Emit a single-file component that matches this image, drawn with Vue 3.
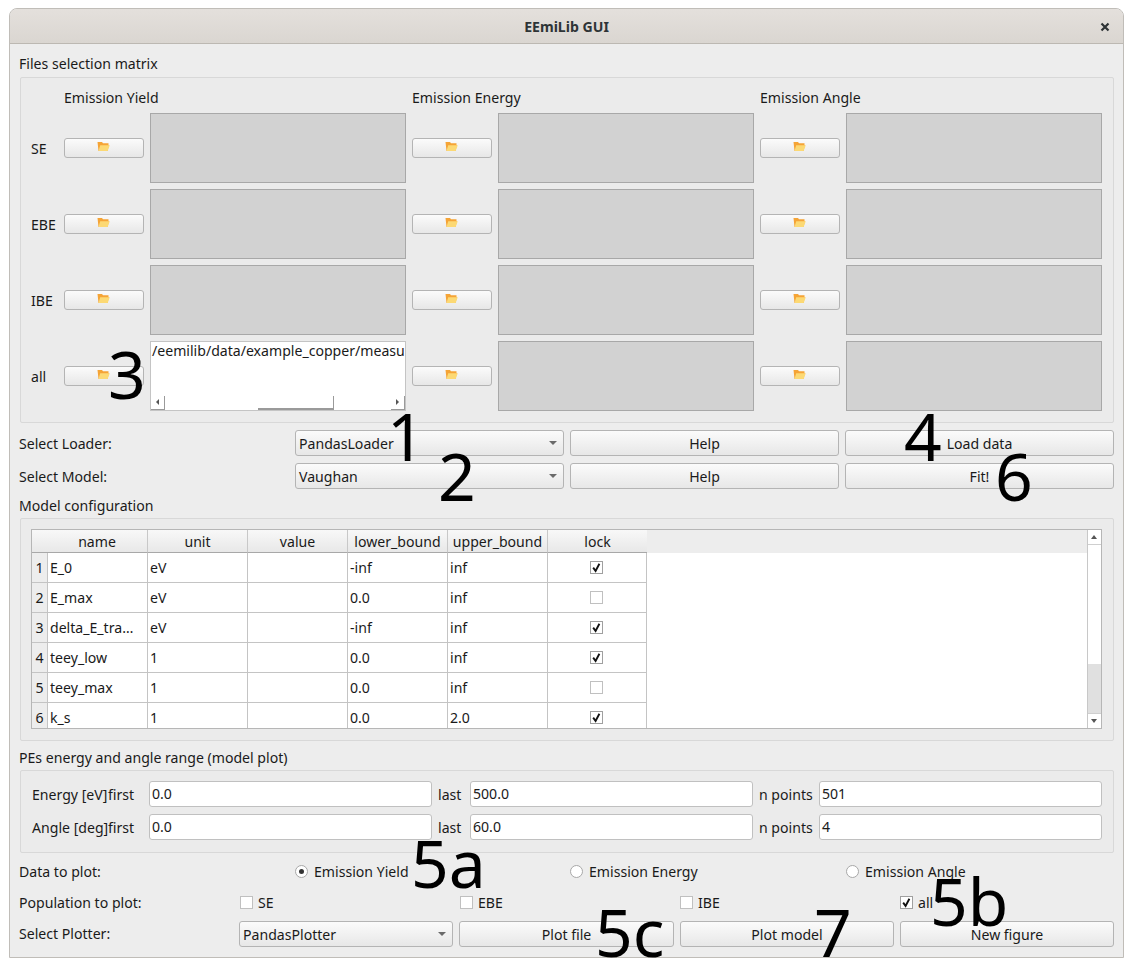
<script setup>
const fileRows = [
  { label: 'SE', cells: ['', '', ''] },
  { label: 'EBE', cells: ['', '', ''] },
  { label: 'IBE', cells: ['', '', ''] },
  { label: 'all', cells: ['/eemilib/data/example_copper/measu', '', ''] },
]
const columns = ['name', 'unit', 'value', 'lower_bound', 'upper_bound', 'lock']
const params = [
  ['E_0', 'eV', '-inf', 'inf', true],
  ['E_max', 'eV', '0.0', 'inf', false],
  ['delta_E_tra…', 'eV', '-inf', 'inf', true],
  ['teey_low', '1', '0.0', 'inf', true],
  ['teey_max', '1', '0.0', 'inf', false],
  ['k_s', '1', '0.0', '2.0', true],
]
const ranges = [
  { label: 'Energy [eV]', first: '0.0', last: '500.0', n: '501' },
  { label: 'Angle [deg]', first: '0.0', last: '60.0', n: '4' },
]
const radios = [
  { label: 'Emission Yield', on: true },
  { label: 'Emission Energy', on: false },
  { label: 'Emission Angle', on: false },
]
const pops = [
  { label: 'SE', on: false },
  { label: 'EBE', on: false },
  { label: 'IBE', on: false },
  { label: 'all', on: true },
]
const notes = [
  { t: '1', x: 377, y: 393 },
  { t: '2', x: 428, y: 433 },
  { t: '3', x: 98, y: 331 },
  { t: '4', x: 894, y: 393 },
  { t: '5a', x: 401, y: 820 },
  { t: '5b', x: 920, y: 858 },
  { t: '5c', x: 585, y: 889 },
  { t: '6', x: 985, y: 433 },
  { t: '7', x: 804, y: 889 },
]
</script>

<template>
  <div class="page">
    <div class="window">
      <header class="titlebar">
        <span class="title">EEmiLib GUI</span>
        <svg class="close" width="10" height="10" viewBox="0 0 10 10">
          <path d="M1.5 1.5 L8.5 8.5 M8.5 1.5 L1.5 8.5" stroke="#2e3436" stroke-width="2.2" fill="none" />
        </svg>
      </header>

      <main class="content">
        <div class="group-title first">Files selection matrix</div>
        <section class="group files">
          <div class="files-grid">
            <div></div>
            <div class="head">Emission Yield</div>
            <div class="head">Emission Energy</div>
            <div class="head">Emission Angle</div>
            <template v-for="row in fileRows" :key="row.label">
              <div class="row-label">{{ row.label }}</div>
              <div v-for="(cell, i) in row.cells" :key="i" class="file-cell">
                <button class="btn folder-btn">
                  <svg width="13" height="11" viewBox="0 0 13 11">
                    <path d="M0.5 1 H5 L6 2.2 H11.5 V4 H12 L10.5 10 H1.5 Z" fill="#f5a436" />
                    <path d="M3.2 4.2 H12.8 L10.6 10 H1.5 Z" fill="#fcd974" />
                  </svg>
                </button>
                <div v-if="cell" class="drop filled">
                  <div class="path">{{ cell }}</div>
                  <div class="hscroll">
                    <span class="sb-arrow left"></span>
                    <span class="sb-thumb"></span>
                    <span class="sb-arrow right"></span>
                  </div>
                </div>
                <div v-else class="drop"></div>
              </div>
            </template>
          </div>
        </section>

        <div class="select-row">
          <label class="select-label">Select Loader:</label>
          <div class="combo"><span>PandasLoader</span><i class="caret"></i></div>
          <button class="btn">Help</button>
          <button class="btn">Load data</button>
        </div>
        <div class="select-row">
          <label class="select-label">Select Model:</label>
          <div class="combo"><span>Vaughan</span><i class="caret"></i></div>
          <button class="btn">Help</button>
          <button class="btn">Fit!</button>
        </div>

        <div class="group-title model-title">Model configuration</div>
        <section class="group model">
          <div class="table">
            <div class="table-view">
              <div class="thead">
                <div class="corner"></div>
                <div v-for="c in columns" :key="c" class="th">{{ c }}</div>
                <div class="th-rest"></div>
              </div>
              <div v-for="(p, i) in params" :key="i" class="tr">
                <div class="rowhead">{{ i + 1 }}</div>
                <div class="td">{{ p[0] }}</div>
                <div class="td">{{ p[1] }}</div>
                <div class="td"></div>
                <div class="td">{{ p[2] }}</div>
                <div class="td">{{ p[3] }}</div>
                <div class="td center">
                  <span class="check" :class="{ on: p[4] }">
                    <svg v-if="p[4]" width="11" height="11" viewBox="0 0 11 11">
                      <path d="M2.2 5.6 L4.6 9 L8.4 1.8" stroke="#111" stroke-width="1.9" fill="none" />
                    </svg>
                  </span>
                </div>
              </div>
            </div>
            <div class="vscroll">
              <div class="vs-btn top"><i class="up"></i></div>
              <div class="vs-track"><div class="vs-thumb"></div></div>
              <div class="vs-btn bottom"><i class="down"></i></div>
            </div>
          </div>
        </section>

        <div class="group-title range-title">PEs energy and angle range (model plot)</div>
        <section class="group range">
          <div v-for="r in ranges" :key="r.label" class="range-row">
            <span class="range-name">{{ r.label }}</span>
            <span class="range-first">first</span>
            <div class="input">{{ r.first }}</div>
            <span class="range-last">last</span>
            <div class="input">{{ r.last }}</div>
            <span class="range-n">n points</span>
            <div class="input">{{ r.n }}</div>
          </div>
        </section>

        <div class="radio-row">
          <span class="bottom-label">Data to plot:</span>
          <div class="radios">
            <label v-for="r in radios" :key="r.label" class="opt radio-opt">
              <span class="radio" :class="{ on: r.on }"></span>{{ r.label }}
            </label>
          </div>
        </div>
        <div class="pop-row">
          <span class="bottom-label">Population to plot:</span>
          <div class="pops">
            <label v-for="p in pops" :key="p.label" class="opt">
              <span class="check" :class="{ on: p.on }">
                <svg v-if="p.on" width="11" height="11" viewBox="0 0 11 11">
                  <path d="M2.2 5.6 L4.6 9 L8.4 1.8" stroke="#111" stroke-width="1.9" fill="none" />
                </svg>
              </span>{{ p.label }}
            </label>
          </div>
        </div>
        <div class="plot-row">
          <span class="bottom-label">Select Plotter:</span>
          <div class="combo"><span>PandasPlotter</span><i class="caret"></i></div>
          <button class="btn">Plot file</button>
          <button class="btn">Plot model</button>
          <button class="btn">New figure</button>
        </div>
      </main>

      <span v-for="n in notes" :key="n.t" class="note" :style="{ left: n.x + 'px', top: n.y + 'px' }">{{ n.t }}</span>
    </div>
  </div>
</template>

<style>
html, body { margin: 0; background: #ffffff; }
</style>

<style scoped>
.page {
  width: 1133px;
  height: 967px;
  padding: 8px 9px 0;
  box-sizing: border-box;
  font-family: "Noto Sans", "Open Sans", sans-serif;
  font-size: 14.1px;
  color: #1a1a1a;
}
.window {
  position: relative;
  width: 1115px;
  height: 950px;
  box-sizing: border-box;
  border: 1px solid #c0bdb8;
  border-radius: 8px 8px 0 0;
  background: #ededed;
}
.titlebar {
  position: relative;
  height: 35px;
  box-sizing: border-box;
  display: flex;
  align-items: center;
  justify-content: center;
  background: linear-gradient(#e4e0dc, #dad6d1);
  border-bottom: 1px solid #bcb8b2;
  border-radius: 7px 7px 0 0;
}
.title { font-weight: 700; color: #2e3436; }
.close { position: absolute; right: 13px; top: 13px; }
.content { padding: 0 9px; }
.group-title { height: 18px; line-height: 18px; white-space: nowrap; }
.group-title.first { margin-top: 11px; }
.group {
  border: 1px solid #d8d8d8;
  border-radius: 2px;
  background: #ebebeb;
  margin-left: 1px;
  box-sizing: border-box;
}
.files { height: 346px; margin-top: 4px; padding: 11px 10px 0 10px; }
.files-grid {
  display: grid;
  grid-template-columns: 33px 348px 348px 342px;
  grid-template-rows: 18px repeat(4, 70px);
  row-gap: 6px;
  align-items: center;
}
.files-grid > .head { height: 18px; line-height: 18px; white-space: nowrap; }
.file-cell { display: flex; align-items: center; gap: 6px; height: 70px; }
.btn {
  font: inherit;
  color: #1a1a1a;
  padding: 0;
  height: 26px;
  box-sizing: border-box;
  border: 1px solid #b4b4b4;
  border-radius: 3px;
  background: linear-gradient(#fbfbfb, #e7e7e7);
  display: flex;
  align-items: center;
  justify-content: center;
}
.folder-btn { width: 80px; height: 20px; flex: none; }
.folder-btn svg { margin: -3px 2px 0 0; }
.drop {
  width: 256px;
  height: 70px;
  flex: none;
  box-sizing: border-box;
  border: 1px solid #a8a8a8;
  background: #d2d2d2;
}
.drop.filled { background: #ffffff; border-color: #c4c4c4; position: relative; }
.path { padding-left: 1px; line-height: 18px; white-space: nowrap; overflow: hidden; }
.hscroll { position: absolute; left: 0; right: 0; bottom: 0; height: 14px; }
.sb-arrow {
  position: absolute;
  bottom: 0;
  width: 14px;
  height: 14px;
  border-right: 1px solid #9a9a9a;
  border-bottom: 1px solid #9a9a9a;
  box-sizing: border-box;
}
.sb-arrow.left { left: 0; }
.sb-arrow.right { right: 0; }
.sb-arrow::after {
  content: "";
  position: absolute;
  top: 3px;
  border-top: 3px solid transparent;
  border-bottom: 3px solid transparent;
}
.sb-arrow.left::after { left: 5px; border-right: 3px solid #555; }
.sb-arrow.right::after { left: 5px; border-left: 3px solid #555; }
.sb-thumb {
  position: absolute;
  left: 107px;
  width: 76px;
  bottom: 0;
  height: 14px;
  box-sizing: border-box;
  border-right: 1px solid #9a9a9a;
  border-bottom: 2px solid #9a9a9a;
}
.select-row {
  display: grid;
  grid-template-columns: 270px 269px 269px 269px;
  column-gap: 6px;
  height: 26px;
  margin-top: 7px;
  align-items: center;
}
.select-label, .bottom-label { white-space: nowrap; }
.combo {
  position: relative;
  height: 26px;
  box-sizing: border-box;
  border: 1px solid #b4b4b4;
  border-radius: 3px;
  background: linear-gradient(#fbfbfb, #e7e7e7);
  display: flex;
  align-items: center;
  padding-left: 3px;
}
.caret {
  position: absolute;
  right: 6px;
  top: 10px;
  width: 0;
  height: 0;
  border-left: 4px solid transparent;
  border-right: 4px solid transparent;
  border-top: 4px solid #6a6a6a;
}
.model-title { margin-top: 8px; }
.model { height: 223px; margin-top: 3px; padding: 10px 11px 0 10px; }
.table {
  display: flex;
  height: 200px;
  box-sizing: border-box;
  border: 1px solid #b6b6b6;
  background: #ffffff;
}
.table-view { flex: 1; overflow: hidden; }
.thead { display: flex; height: 23px; background: #ededed; }
.corner {
  width: 15px;
  box-sizing: border-box;
  background: #f7f7f7;
  border-bottom: 1px solid #a8a8a8;
}
.th {
  width: 100px;
  box-sizing: border-box;
  border-left: 1px solid #c8c8c8;
  border-bottom: 1px solid #a8a8a8;
  background: linear-gradient(#f8f8f8, #e8e8e8);
  text-align: center;
  line-height: 23px;
  white-space: nowrap;
}
.corner { background: linear-gradient(#f8f8f8, #e8e8e8); }
.th:nth-child(2) { border-left: 0; }
.th-rest { flex: 1; }
.tr { display: flex; height: 30px; }
.rowhead {
  width: 15px;
  box-sizing: border-box;
  background: #ededed;
  border-bottom: 1px solid #c4c4c4;
  text-align: center;
  line-height: 29px;
}
.td {
  width: 100px;
  box-sizing: border-box;
  border-left: 1px solid #c4c4c4;
  border-bottom: 1px solid #c4c4c4;
  padding-left: 2px;
  line-height: 29px;
  white-space: nowrap;
  overflow: hidden;
}
.td:last-child { border-right: 1px solid #c4c4c4; }
.td.center { display: flex; justify-content: center; align-items: center; padding: 0 1px 1px 0; }
.vscroll {
  width: 14px;
  flex: none;
  box-sizing: border-box;
  border-left: 1px solid #c8c8c8;
  background: #ffffff;
  display: flex;
  flex-direction: column;
}
.vs-btn { height: 14px; flex: none; position: relative; }
.vs-btn.top { border-bottom: 1px solid #cfcfcf; }
.vs-btn.bottom { border-top: 1px solid #cfcfcf; }
.vs-btn i {
  position: absolute;
  left: 3px;
  top: 5px;
  border-left: 3px solid transparent;
  border-right: 3px solid transparent;
}
.vs-btn i.up { border-bottom: 4px solid #555; }
.vs-btn i.down { border-top: 4px solid #555; }
.vs-track { flex: 1; display: flex; flex-direction: column; justify-content: flex-end; }
.vs-thumb { height: 49px; background: #e0e0e0; }
.check {
  display: inline-block;
  width: 13px;
  height: 13px;
  box-sizing: border-box;
  border: 1px solid #c0c0c0;
  background: #ffffff;
  position: relative;
  flex: none;
}
.check.on { border-color: #a0a0a0; }
.check svg { position: absolute; left: 0; top: 0; }
.range-title { margin-top: 8px; }
.range { height: 83px; margin-top: 3px; padding: 10px 10px 0 10px; }
.range-row {
  display: grid;
  grid-template-columns: 77px 41px 283px 38px 283px 66px 283px;
  height: 26px;
  align-items: center;
  margin-bottom: 7px;
  white-space: nowrap;
}
.range-name { padding-left: 1px; }
.range-last, .range-n { padding-left: 6px; }
.input {
  height: 26px;
  line-height: 24px;
  box-sizing: border-box;
  border: 1px solid #c0c0c0;
  border-radius: 3px;
  background: #ffffff;
  padding-left: 2px;
}
.radio-row, .pop-row {
  display: flex;
  align-items: center;
  white-space: nowrap;
}
.radio-row { height: 18px; margin-top: 9px; }
.pop-row { height: 18px; margin-top: 13px; }
.bottom-label { flex: none; }
.radio-row .bottom-label { width: 276px; }
.radios { display: grid; grid-template-columns: 275px 276px 1fr; }
.pop-row .bottom-label { width: 221px; }
.pops { display: grid; grid-template-columns: 220px 220px 220px 1fr; }
.opt { display: flex; align-items: center; gap: 5px; }
.radio-opt { gap: 6px; }
.radio {
  width: 13px;
  height: 13px;
  border-radius: 50%;
  box-sizing: border-box;
  border: 1px solid #a8a8a8;
  background: #ffffff;
  position: relative;
  flex: none;
}
.radio.on::after {
  content: "";
  position: absolute;
  left: 3px;
  top: 3px;
  width: 5px;
  height: 5px;
  border-radius: 50%;
  background: #333;
}
.plot-row {
  display: grid;
  grid-template-columns: 214px 215px 214px 214px;
  column-gap: 6px;
  padding-left: 220px;
  position: relative;
  height: 26px;
  margin-top: 10px;
  align-items: center;
}
.plot-row .bottom-label { position: absolute; left: 0; top: 3px; }
.note {
  position: absolute;
  font-size: 66px;
  line-height: 66px;
  color: #000;
  pointer-events: none;
  white-space: nowrap;
}
</style>
